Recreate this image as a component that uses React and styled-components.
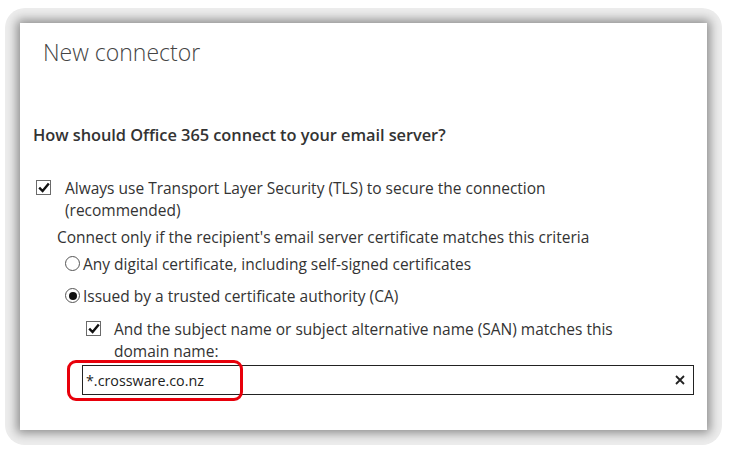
import React from "react";
import styled, { createGlobalStyle } from "styled-components";

const Global = createGlobalStyle`
  html, body {
    margin: 0;
    padding: 0;
    background: #ffffff;
  }
  body {
    font-family: "Open Sans", "Noto Sans", sans-serif;
    color: #333333;
  }
`;

const Page = styled.div`
  width: 735px;
  height: 462px;
  padding: 8px 0 0 5px;
  box-sizing: border-box;
`;

const Frame = styled.div`
  width: 717px;
  height: 437px;
  box-sizing: border-box;
  padding: 15px;
  border-radius: 20px;
  background: #ededed;
  overflow: hidden;
`;

const Panel = styled.div`
  position: relative;
  width: 687px;
  height: 407px;
  box-sizing: border-box;
  background: #ffffff;
  padding: 14px 14px 0 13px;
  box-shadow: 0 0 10px 3px rgba(0, 0, 0, 0.42);
`;

const Title = styled.h1`
  margin: 0 0 0 10px;
  font-size: 23px;
  line-height: 30px;
  font-weight: 300;
  color: #444;
`;

const Question = styled.h2`
  margin: 57px 0 0 0;
  font-size: 16.4px;
  line-height: 22px;
  font-weight: 600;
  color: #333;
  letter-spacing: -0.05px;
`;

const Row = styled.div`
  display: flex;
  align-items: flex-start;
  margin-top: ${(p) => p.$top || 0}px;
  margin-left: ${(p) => p.$indent || 0}px;
  font-size: 15.5px;
  line-height: 22px;
  color: #333;
`;

const Label = styled.div`
  width: ${(p) => p.$width || "auto"};
`;

const Box = styled.span`
  flex: none;
  width: 13px;
  height: 13px;
  margin: 3px ${(p) => p.$gap}px 0 0;
  border: 1px solid #6a6a6a;
  background: #fff;
  display: flex;
  align-items: center;
  justify-content: center;
`;

const Radio = styled.span`
  flex: none;
  width: 15px;
  height: 15px;
  margin: 3px 3px 0 0;
  border: 1px solid #555;
  border-radius: 50%;
  display: flex;
  align-items: center;
  justify-content: center;
  box-sizing: border-box;
  &::after {
    content: "";
    display: ${(p) => (p.$on ? "block" : "none")};
    width: 8px;
    height: 8px;
    border-radius: 50%;
    background: #111;
  }
`;

const Input = styled.div`
  margin: 3px 0 0 49px;
  width: 612px;
  height: 30px;
  box-sizing: border-box;
  border: 1px solid #222;
  display: flex;
  align-items: center;
  justify-content: space-between;
  padding: 0 8px 0 3px;
  font-size: 14.3px;
  color: #222;
`;

const Clear = styled.span`
  display: flex;
  align-items: center;
`;

const Highlight = styled.div`
  position: absolute;
  left: 47px;
  top: 337px;
  width: 176px;
  height: 41px;
  box-sizing: border-box;
  border: 3px solid #e8000b;
  border-radius: 9px;
  pointer-events: none;
`;

const Check = () => (
  <svg width="12" height="11" viewBox="0 0 12 11">
    <path d="M1.2 5.6 L4.6 9 L10.8 1.4" fill="none" stroke="#111" strokeWidth="2.4" />
  </svg>
);

const App = () => {
  return (
    <>
      <Global />
      <Page>
        <Frame>
          <Panel>
            <Title>New connector</Title>
            <Question>How should Office 365 connect to your email server?</Question>
            <Row $top={31} $indent={3}>
              <Box $gap={14}>
                <Check />
              </Box>
              <Label $width="500px">
                Always use Transport Layer Security (TLS) to secure the connection (recommended)
              </Label>
            </Row>
            <Row $top={5} $indent={24}>
              Connect only if the recipient's email server certificate matches this criteria
            </Row>
            <Row $top={5} $indent={32}>
              <Radio />
              Any digital certificate, including self-signed certificates
            </Row>
            <Row $top={10} $indent={32}>
              <Radio $on />
              Issued by a trusted certificate authority (CA)
            </Row>
            <Row $top={11} $indent={53}>
              <Box $gap={13}>
                <Check />
              </Box>
              <Label $width="520px">
                And the subject name or subject alternative name (SAN) matches this domain name:
              </Label>
            </Row>
            <Input>
              <span>*.crossware.co.nz</span>
              <Clear>
                <svg width="10" height="10" viewBox="0 0 10 10">
                  <path d="M1 1 L9 9 M9 1 L1 9" stroke="#222" strokeWidth="1.8" />
                </svg>
              </Clear>
            </Input>
            <Highlight />
          </Panel>
        </Frame>
      </Page>
    </>
  );
};

export default App;
